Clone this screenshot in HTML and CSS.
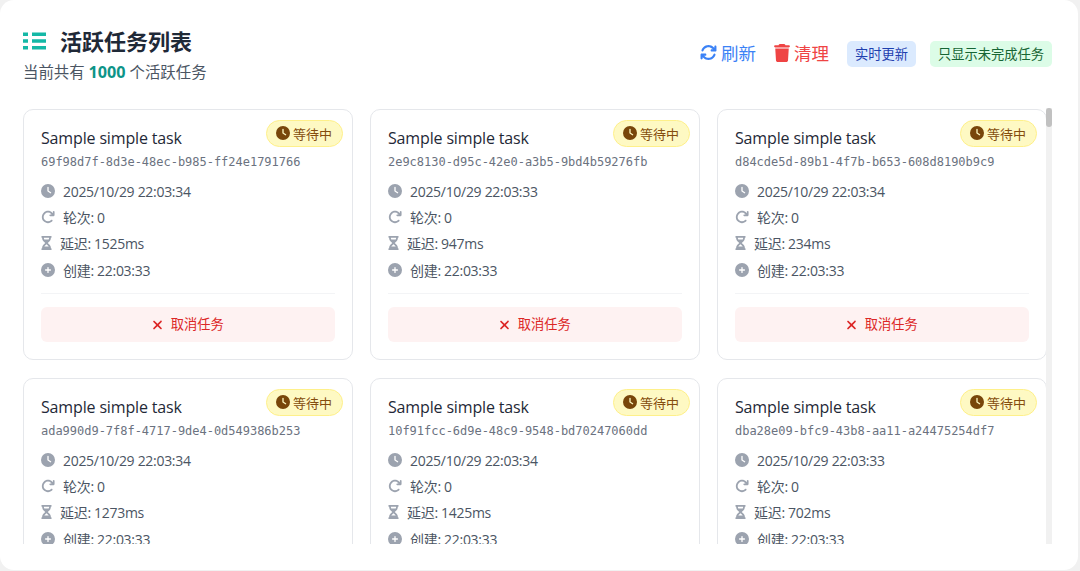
FILE: index.html
```html
<!DOCTYPE html>
<html lang="zh-CN">
<head>
<meta charset="utf-8">
<title>活跃任务列表</title>
<link rel="stylesheet" href="styles.css">
</head>
<body>
<svg class="sprite" width="0" height="0" aria-hidden="true">
  <symbol id="i-clock" viewBox="0 0 512 512"><path d="M256 0a256 256 0 1 1 0 512A256 256 0 1 1 256 0zM232 120V256c0 8 4 15.500 10.700 20l96 64c11 7.400 25.900 4.400 33.300-6.700s4.400-25.900-6.700-33.300L280 243.200V120c0-13.300-10.700-24-24-24s-24 10.700-24 24z"/></symbol>
  <symbol id="i-redo" viewBox="0 0 512 512"><path d="M386.300 160H336c-17.700 0-32 14.300-32 32s14.300 32 32 32h128c17.700 0 32-14.300 32-32V64c0-17.700-14.300-32-32-32s-32 14.300-32 32v51.200L414.400 97.600c-87.500-87.500-229.300-87.500-316.800 0s-87.500 229.300 0 316.800 229.300 87.500 316.800 0c12.500-12.500 12.500-32.800 0-45.300s-32.800-12.500-45.300 0c-62.500 62.500-163.800 62.500-226.300 0s-62.500-163.800 0-226.300 163.800-62.500 226.300 0L386.300 160z"/></symbol>
  <symbol id="i-hourglass" viewBox="0 0 384 512"><path d="M32 0C14.300 0 0 14.300 0 32s14.300 32 32 32V75c0 42.400 16.900 83.100 46.900 113.100L146.700 256 78.900 323.900C48.900 353.900 32 394.600 32 437v11c-17.700 0-32 14.300-32 32s14.300 32 32 32H352c17.700 0 32-14.300 32-32s-14.300-32-32-32V437c0-42.400-16.900-83.100-46.900-113.100L237.300 256l67.900-67.900c30-30 46.900-70.700 46.900-113.100V64c17.700 0 32-14.300 32-32S369.700 0 352 0H32zM96 75V64H288V75c0 19-5.600 37.400-16 53H112c-10.300-15.600-16-34-16-53zm16 309c3.500-5.300 7.600-10.300 12.100-14.900L192 301.300l67.900 67.900c4.600 4.600 8.600 9.600 12.100 14.900H112z"/></symbol>
  <symbol id="i-plus" viewBox="0 0 512 512"><path d="M256 512A256 256 0 1 0 256 0a256 256 0 1 0 0 512zM232 344V280H168c-13.300 0-24-10.700-24-24s10.700-24 24-24h64V168c0-13.300 10.700-24 24-24s24 10.700 24 24v64h64c13.300 0 24 10.700 24 24s-10.700 24-24 24H280v64c0 13.300-10.700 24-24 24s-24-10.700-24-24z"/></symbol>
  <symbol id="i-x" viewBox="0 0 384 512"><path d="M342.600 150.600c12.500-12.500 12.500-32.800 0-45.300s-32.800-12.500-45.300 0L192 210.700 86.600 105.400c-12.500-12.500-32.800-12.500-45.300 0s-12.500 32.800 0 45.300L146.700 256 41.400 361.400c-12.500 12.500-12.500 32.800 0 45.300s32.800 12.500 45.300 0L192 301.300l105.400 105.300c12.500 12.500 32.800 12.500 45.300 0s12.500-32.800 0-45.300L237.300 256l105.300-105.400z"/></symbol>
</svg>
<main class="panel">
  <header class="head">
    <div class="head-left">
      <h1 class="title">
        <svg class="title-icon" viewBox="0 0 23 18"><path d="M0 .5h5v3.400H0zM0 7.300h5v3.400H0zM0 14.100h5v3.400H0zM9 .5h14v3.400H9zM9 7.300h14v3.400H9zM9 14.100h14v3.400H9z"/></svg>
        <span>活跃任务列表</span>
      </h1>
      <p class="sub">当前共有 <strong class="count">1000</strong> 个活跃任务</p>
    </div>
    <div class="head-right">
      <button class="link link-blue"><svg class="link-icon" viewBox="0 0 512 512"><path d="M105.100 202.600c7.700-21.800 20.200-42.300 37.800-59.800c62.500-62.500 163.800-62.500 226.300 0L386.300 160H352c-17.700 0-32 14.300-32 32s14.300 32 32 32H463.500h.4c17.700 0 32-14.300 32-32V80c0-17.700-14.300-32-32-32s-32 14.300-32 32v35.200L414.400 97.600c-87.500-87.500-229.300-87.500-316.800 0C73.200 122 55.600 150.700 44.800 181.400c-5.900 16.700 2.900 34.900 19.500 40.800s34.900-2.900 40.800-19.500zM39 289.300c-5 1.500-9.800 4.200-13.700 8.200c-4 4-6.700 8.800-8.100 14c-.3 1.200-.6 2.500-.8 3.800c-.3 1.700-.4 3.400-.4 5.100V432c0 17.700 14.300 32 32 32s32-14.300 32-32V396.900l17.600 17.500c87.500 87.400 229.300 87.400 316.700 0c24.400-24.400 42.100-53.100 52.900-83.700c5.900-16.700-2.900-34.900-19.500-40.800s-34.900 2.900-40.800 19.500c-7.700 21.800-20.200 42.300-37.800 59.800c-62.500 62.500-163.800 62.500-226.300 0l-.1-.1L125.600 352H160c17.700 0 32-14.300 32-32s-14.300-32-32-32H48.400c-1.600 0-3.200 .1-4.800 .3s-3.100 .5-4.600 1z"/></svg>刷新</button>
      <button class="link link-red"><svg class="link-icon trash" viewBox="0 0 448 512"><path d="M135.200 17.700L128 32H32C14.300 32 0 46.300 0 64S14.300 96 32 96H416c17.700 0 32-14.300 32-32s-14.300-32-32-32H320l-7.200-14.300C307.400 6.800 296.300 0 284.200 0H163.800c-12.100 0-23.200 6.800-28.600 17.700zM416 128H32L53.200 467c1.600 25.300 22.600 45 47.900 45H346.900c25.300 0 46.300-19.700 47.900-45L416 128z"/></svg>清理</button>
      <span class="tag tag-blue">实时更新</span>
      <span class="tag tag-green">只显示未完成任务</span>
    </div>
  </header>
  <div class="list">
    <div class="scroller">
      <div class="grid">
        <article class="card">
          <span class="badge"><svg class="badge-icon"><use href="#i-clock"/></svg>等待中</span>
          <h2 class="card-title">Sample simple task</h2>
          <div class="uuid">69f98d7f-8d3e-48ec-b985-ff24e1791766</div>
          <ul class="meta">
            <li class="row"><svg class="ico"><use href="#i-clock"/></svg><span>2025/10/29 22:03:34</span></li>
            <li class="row"><svg class="ico"><use href="#i-redo"/></svg><span>轮次: 0</span></li>
            <li class="row"><svg class="ico ico-narrow"><use href="#i-hourglass"/></svg><span>延迟: 1525ms</span></li>
            <li class="row"><svg class="ico"><use href="#i-plus"/></svg><span>创建: 22:03:33</span></li>
          </ul>
          <div class="foot"><button class="cancel"><svg class="cancel-icon"><use href="#i-x"/></svg>取消任务</button></div>
        </article>
        <article class="card">
          <span class="badge"><svg class="badge-icon"><use href="#i-clock"/></svg>等待中</span>
          <h2 class="card-title">Sample simple task</h2>
          <div class="uuid">2e9c8130-d95c-42e0-a3b5-9bd4b59276fb</div>
          <ul class="meta">
            <li class="row"><svg class="ico"><use href="#i-clock"/></svg><span>2025/10/29 22:03:33</span></li>
            <li class="row"><svg class="ico"><use href="#i-redo"/></svg><span>轮次: 0</span></li>
            <li class="row"><svg class="ico ico-narrow"><use href="#i-hourglass"/></svg><span>延迟: 947ms</span></li>
            <li class="row"><svg class="ico"><use href="#i-plus"/></svg><span>创建: 22:03:33</span></li>
          </ul>
          <div class="foot"><button class="cancel"><svg class="cancel-icon"><use href="#i-x"/></svg>取消任务</button></div>
        </article>
        <article class="card">
          <span class="badge"><svg class="badge-icon"><use href="#i-clock"/></svg>等待中</span>
          <h2 class="card-title">Sample simple task</h2>
          <div class="uuid">d84cde5d-89b1-4f7b-b653-608d8190b9c9</div>
          <ul class="meta">
            <li class="row"><svg class="ico"><use href="#i-clock"/></svg><span>2025/10/29 22:03:34</span></li>
            <li class="row"><svg class="ico"><use href="#i-redo"/></svg><span>轮次: 0</span></li>
            <li class="row"><svg class="ico ico-narrow"><use href="#i-hourglass"/></svg><span>延迟: 234ms</span></li>
            <li class="row"><svg class="ico"><use href="#i-plus"/></svg><span>创建: 22:03:33</span></li>
          </ul>
          <div class="foot"><button class="cancel"><svg class="cancel-icon"><use href="#i-x"/></svg>取消任务</button></div>
        </article>
        <article class="card">
          <span class="badge"><svg class="badge-icon"><use href="#i-clock"/></svg>等待中</span>
          <h2 class="card-title">Sample simple task</h2>
          <div class="uuid">ada990d9-7f8f-4717-9de4-0d549386b253</div>
          <ul class="meta">
            <li class="row"><svg class="ico"><use href="#i-clock"/></svg><span>2025/10/29 22:03:34</span></li>
            <li class="row"><svg class="ico"><use href="#i-redo"/></svg><span>轮次: 0</span></li>
            <li class="row"><svg class="ico ico-narrow"><use href="#i-hourglass"/></svg><span>延迟: 1273ms</span></li>
            <li class="row"><svg class="ico"><use href="#i-plus"/></svg><span>创建: 22:03:33</span></li>
          </ul>
          <div class="foot"><button class="cancel"><svg class="cancel-icon"><use href="#i-x"/></svg>取消任务</button></div>
        </article>
        <article class="card">
          <span class="badge"><svg class="badge-icon"><use href="#i-clock"/></svg>等待中</span>
          <h2 class="card-title">Sample simple task</h2>
          <div class="uuid">10f91fcc-6d9e-48c9-9548-bd70247060dd</div>
          <ul class="meta">
            <li class="row"><svg class="ico"><use href="#i-clock"/></svg><span>2025/10/29 22:03:34</span></li>
            <li class="row"><svg class="ico"><use href="#i-redo"/></svg><span>轮次: 0</span></li>
            <li class="row"><svg class="ico ico-narrow"><use href="#i-hourglass"/></svg><span>延迟: 1425ms</span></li>
            <li class="row"><svg class="ico"><use href="#i-plus"/></svg><span>创建: 22:03:33</span></li>
          </ul>
          <div class="foot"><button class="cancel"><svg class="cancel-icon"><use href="#i-x"/></svg>取消任务</button></div>
        </article>
        <article class="card">
          <span class="badge"><svg class="badge-icon"><use href="#i-clock"/></svg>等待中</span>
          <h2 class="card-title">Sample simple task</h2>
          <div class="uuid">dba28e09-bfc9-43b8-aa11-a24475254df7</div>
          <ul class="meta">
            <li class="row"><svg class="ico"><use href="#i-clock"/></svg><span>2025/10/29 22:03:33</span></li>
            <li class="row"><svg class="ico"><use href="#i-redo"/></svg><span>轮次: 0</span></li>
            <li class="row"><svg class="ico ico-narrow"><use href="#i-hourglass"/></svg><span>延迟: 702ms</span></li>
            <li class="row"><svg class="ico"><use href="#i-plus"/></svg><span>创建: 22:03:33</span></li>
          </ul>
          <div class="foot"><button class="cancel"><svg class="cancel-icon"><use href="#i-x"/></svg>取消任务</button></div>
        </article>
      </div>
    </div>
    <div class="track"><div class="thumb"></div></div>
  </div>
</main>
</body>
</html>
```
FILE: styles.css
```css
* { box-sizing: border-box; }
html, body { height: 100%; }
body {
  margin: 0;
  background: #f1f1f1;
  overflow: hidden;
  font-family: "Open Sans", "Noto Sans CJK SC", sans-serif;
  color: #374151;
}
.sprite { position: absolute; }
.panel {
  width: 1078px;
  height: 570px;
  background: #fff;
  border-radius: 14px;
  padding: 23px 26px 26px 23px;
}
.head {
  height: 85px;
  display: flex;
  justify-content: space-between;
  align-items: flex-start;
}
.title {
  margin: 0;
  height: 33px;
  display: flex;
  align-items: center;
  gap: 14px;
  font-size: 22px;
  font-weight: 700;
  color: #1f2937;
}
.title-icon { width: 23px; height: 18px; margin-top: 3px; fill: #14b8a6; }
.sub { margin: 5px 0 0; font-size: 15.400px; line-height: 22px; color: #4b5563; }
.count { font-size: 16.200px; color: #0d9488; font-weight: 700; }
.head-right {
  display: flex;
  align-items: center;
  height: 26px;
  margin-top: 18px;
}
.link {
  border: 0;
  background: none;
  padding: 0 0 3px;
  display: flex;
  align-items: center;
  gap: 4px;
  font: inherit;
  font-size: 17.500px;
}
.link-blue { color: #3b82f6; margin-right: 18px; }
.link-red { color: #ef4444; margin-right: 18px; }
.link-icon { width: 17px; height: 17px; fill: currentColor; }
.trash { width: 16px; height: 18px; }
.tag {
  height: 26px;
  display: flex;
  align-items: center;
  padding: 0 8px 2px;
  border-radius: 5px;
  font-size: 13.250px;
}
.tag-blue { background: #dbeafe; color: #1e40af; margin-right: 14px; }
.tag-green { background: #dcfce7; color: #166534; }
.list { position: relative; height: 436px; }
.scroller {
  height: 100%;
  overflow: hidden;
}
.track {
  position: absolute;
  top: 0;
  right: 0;
  bottom: 0;
  width: 6px;
  background: #f1f1f1;
}
.thumb { height: 19px; background: #c1c1c1; border-radius: 3px; }
.grid {
  display: grid;
  grid-template-columns: repeat(3, 329.500px);
  gap: 18px 17.500px;
  padding-top: 1px;
}
.card {
  position: relative;
  height: 251px;
  padding: 17px 17px 0;
  border: 1px solid #e5e7eb;
  border-radius: 10px;
  background: #fff;
}
.badge {
  position: absolute;
  top: 10px;
  right: 8.500px;
  height: 27px;
  padding: 0 10px 1px 9px;
  display: flex;
  align-items: center;
  gap: 3px;
  background: #fef9c3;
  border: 1px solid #fef08a;
  border-radius: 14px;
  color: #854d0e;
  font-size: 13px;
}
.badge-icon { width: 14px; height: 14px; fill: #78460a; }
.card-title { margin: 0; font-size: 16px; font-weight: 400; line-height: 22px; letter-spacing: -0.150px; color: #1f2937; }
.uuid {
  margin-top: 5px;
  font-family: "DejaVu Sans Mono", monospace;
  font-size: 12px;
  line-height: 16px;
  letter-spacing: -0.020px;
  color: #6b7280;
}
.meta { list-style: none; margin: 8px 0 0; padding: 0; }
.row {
  height: 26.200px;
  display: flex;
  align-items: center;
  gap: 8px;
  font-size: 14px;
  letter-spacing: -0.300px;
  color: #4b5563;
}
.ico { width: 14px; height: 14px; fill: #9ca3af; flex: none; }
.ico-narrow { width: 11px; }
.foot { margin-top: 10.400px; padding-top: 13px; border-top: 1px solid #f3f4f6; }
.cancel {
  width: 100%;
  height: 35px;
  display: flex;
  align-items: center;
  justify-content: center;
  gap: 8px;
  border: 0;
  border-radius: 6px;
  background: #fef2f2;
  color: #dc2626;
  font: inherit;
  font-size: 13.250px;
  line-height: 1;
}
.cancel-icon { width: 11px; height: 14px; fill: currentColor; }
```
